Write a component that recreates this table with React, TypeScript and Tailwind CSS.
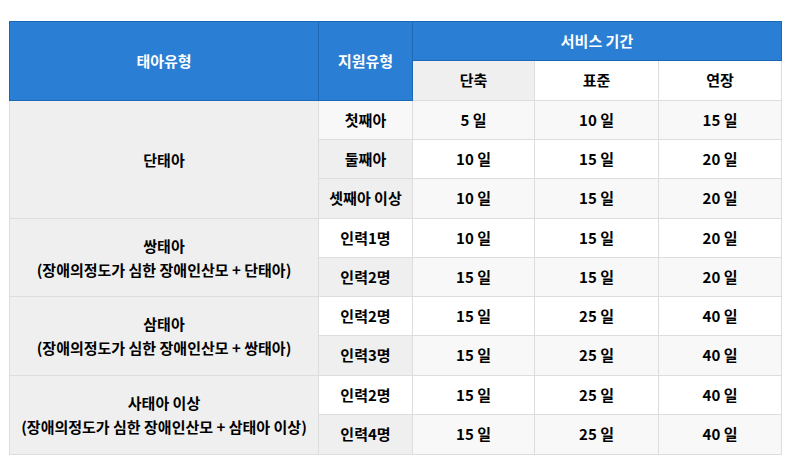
import React from "react";

interface BodyRow {
  group?: { title: string; sub?: string; span: number };
  kind: string;
  kindBg: string;
  rowBg: string;
  h: string;
  days: [string, string, string];
}

const rows: BodyRow[] = [
  { group: { title: "단태아", span: 3 }, kind: "첫째아", kindBg: "bg-[#f8f8f8]", rowBg: "bg-[#f8f8f8]", h: "h-[39px]", days: ["5 일", "10 일", "15 일"] },
  { kind: "둘째아", kindBg: "bg-[#efefef]", rowBg: "bg-white", h: "h-[39px]", days: ["10 일", "15 일", "20 일"] },
  { kind: "셋째아 이상", kindBg: "bg-[#efefef]", rowBg: "bg-[#f8f8f8]", h: "h-[40px]", days: ["10 일", "15 일", "20 일"] },
  { group: { title: "쌍태아", sub: "(장애의정도가 심한 장애인산모 + 단태아)", span: 2 }, kind: "인력1명", kindBg: "bg-white", rowBg: "bg-white", h: "h-[39px]", days: ["10 일", "15 일", "20 일"] },
  { kind: "인력2명", kindBg: "bg-[#efefef]", rowBg: "bg-[#f8f8f8]", h: "h-[39px]", days: ["15 일", "15 일", "20 일"] },
  { group: { title: "삼태아", sub: "(장애의정도가 심한 장애인산모 + 쌍태아)", span: 2 }, kind: "인력2명", kindBg: "bg-white", rowBg: "bg-white", h: "h-[39px]", days: ["15 일", "25 일", "40 일"] },
  { kind: "인력3명", kindBg: "bg-[#efefef]", rowBg: "bg-[#f8f8f8]", h: "h-[40px]", days: ["15 일", "25 일", "40 일"] },
  { group: { title: "사태아 이상", sub: "(장애의정도가 심한 장애인산모 + 삼태아 이상)", span: 2 }, kind: "인력2명", kindBg: "bg-white", rowBg: "bg-white", h: "h-[39px]", days: ["15 일", "25 일", "40 일"] },
  { kind: "인력4명", kindBg: "bg-[#efefef]", rowBg: "bg-[#f8f8f8]", h: "h-[40px]", days: ["15 일", "25 일", "40 일"] },
];

export default function App() {
  return (
    <div
      className="w-[792px] h-[462px] bg-white pt-[21px] pl-[9px] text-[15px] text-black"
      style={{ fontFamily: '"Noto Sans CJK KR", "Noto Sans", sans-serif' }}
    >
      <table className="w-[772px] table-fixed border-collapse text-center leading-[1.5]">
        <colgroup>
          <col className="w-[309px]" />
          <col className="w-[94px]" />
          <col className="w-[122px]" />
          <col className="w-[124px]" />
          <col className="w-[123px]" />
        </colgroup>
        <thead>
          <tr className="h-[39px]">
            <th rowSpan={2} className="bg-[#2a7fd4] border border-[#1c68b6] font-bold text-white">
              태아유형
            </th>
            <th rowSpan={2} className="bg-[#2a7fd4] border border-[#1c68b6] font-bold text-white">
              지원유형
            </th>
            <th colSpan={3} className="bg-[#2a7fd4] border border-[#1c68b6] font-bold text-white">
              서비스 기간
            </th>
          </tr>
          <tr className="h-[40px]">
            <th className="bg-[#efefef] border border-[#dddddd] font-bold">단축</th>
            <th className="bg-white border border-[#dddddd] font-bold">표준</th>
            <th className="bg-white border border-[#dddddd] font-bold">연장</th>
          </tr>
        </thead>
        <tbody>
          {rows.map((r, i) => (
            <tr key={i} className={r.h}>
              {r.group && (
                <td rowSpan={r.group.span} className="bg-[#efefef] border border-[#dddddd] font-bold leading-[1.6]">
                  <div>{r.group.title}</div>
                  {r.group.sub && <div>{r.group.sub}</div>}
                </td>
              )}
              <td className={`${r.kindBg} border border-[#dddddd] font-bold`}>{r.kind}</td>
              {r.days.map((d, j) => (
                <td key={j} className={`${r.rowBg} border border-[#dddddd] font-bold`}>
                  {d}
                </td>
              ))}
            </tr>
          ))}
        </tbody>
      </table>
    </div>
  );
}
